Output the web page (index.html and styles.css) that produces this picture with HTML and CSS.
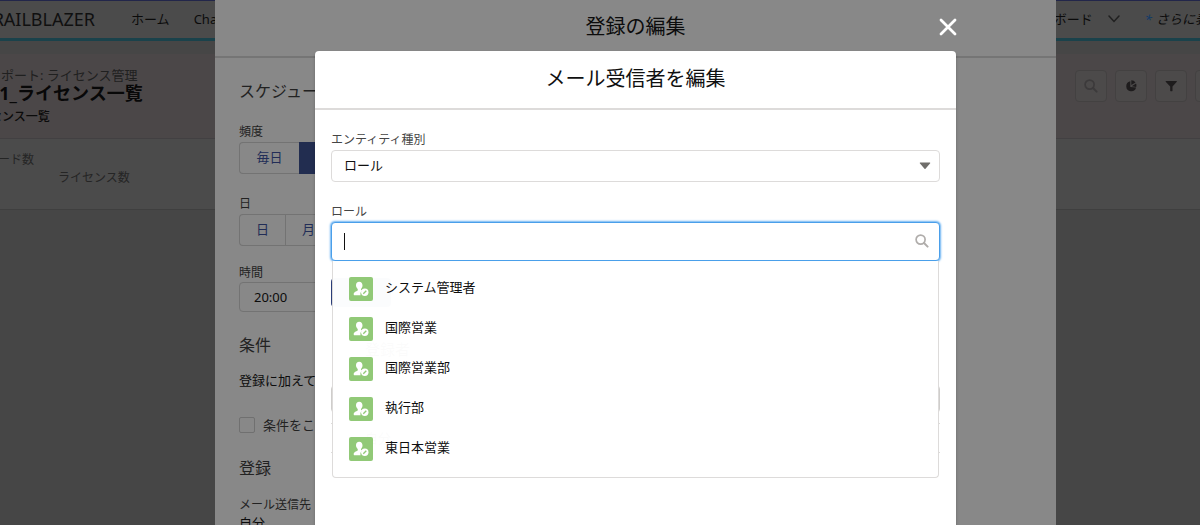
FILE: index.html
```html
<!DOCTYPE html>
<html lang="ja">
<head>
<meta charset="utf-8">
<title>メール受信者を編集</title>
<link rel="stylesheet" href="styles.css">
</head>
<body>
<svg class="defs" aria-hidden="true">
  <symbol id="search" viewBox="0 0 14 14"><circle cx="5.6" cy="5.6" r="4.5" fill="none" stroke="currentColor" stroke-width="1.700"/><path d="M9 9l3.600 3.600" fill="none" stroke="currentColor" stroke-width="2" stroke-linecap="round"/></symbol>
  <symbol id="role" viewBox="0 0 24 24"><rect width="24" height="24" rx="2" fill="#91c977"/><path d="M10.200 4.800c2 0 3.300 1.600 3.300 3.600 0 1.300-.6 2.400-1.300 3.300-.4.500-.3 1.200.3 1.500l.9.400c-1.300.8-2 2-2 3.400 0 .5.100 1 .2 1.300H5.700c-.7 0-1-.4-1-1v-.5c0-1.400 1.500-2.200 3.200-2.900.9-.4 1-.9.9-1.500-.1-.4-.3-.6-.5-.9-.8-.8-1.300-1.900-1.300-3.200 0-2 1.200-3.500 3.200-3.500z" fill="#fff"/><circle cx="15.800" cy="15.200" r="3.700" fill="#fff"/><path d="M14.300 16.700l3-3" stroke="#91c977" stroke-width="1.300"/></symbol>
</svg>

<div class="page">
  <header class="nav">
    <span class="brand">TRAILBLAZER</span>
    <a class="nav-item" href="#">ホーム</a>
    <a class="nav-item" href="#">Chatter</a>
    <div class="nav-end">
      <a class="nav-item" href="#">ダッシュボード</a>
      <svg class="nav-chevron" viewBox="0 0 12 8"><path d="M1 1l5 5.500L11 1" fill="none" stroke="currentColor" stroke-width="1.500" stroke-linecap="round"/></svg>
      <a class="nav-item nav-more" href="#"><span class="star">*</span><span>さらに表示</span></a>
    </div>
  </header>
  <section class="report-head">
    <div class="report-titles">
      <p class="report-kind">レポート: ライセンス管理</p>
      <h1 class="report-title">01_ライセンス一覧</h1>
      <p class="report-desc">ライセンス一覧</p>
    </div>
    <div class="tools">
      <button class="tool tool-off" type="button" aria-label="検索"><svg viewBox="0 0 14 14"><use href="#search"/></svg></button>
      <button class="tool" type="button" aria-label="グラフ"><svg viewBox="0 0 14 14"><path d="M6.300 2.300a5 5 0 1 0 5.800 6.200L6.300 8z" fill="currentColor"/><path d="M7.300 1.200v4.900l4.200-2.700A5 5 0 0 0 7.300 1.200z" fill="currentColor"/><path d="M7.800 7.200l4.200-2.600c.5 1 .5 2.200.200 3.400z" fill="currentColor"/></svg></button>
      <button class="tool" type="button" aria-label="検索条件"><svg viewBox="0 0 14 14"><path d="M2 2h10.500c.4 0 .5.400.3.700L8.500 7.500v4.200c0 .3-.2.500-.5.500H6.700c-.3 0-.5-.2-.5-.5V7.500L1.700 2.700C1.500 2.400 1.600 2 2 2z" fill="currentColor"/></svg></button>
      <button class="tool" type="button" aria-label="その他"></button>
    </div>
  </section>
  <section class="totals">
    <span class="total-records">レコード数</span>
    <span class="total-licenses">ライセンス数</span>
  </section>
</div>

<div class="layer panel-layer">
  <section class="panel">
    <h2 class="panel-title">登録の編集</h2>
    <form class="panel-body">
      <h3 class="section-title">スケジュール</h3>
      <span class="label freq-label">頻度</span>
      <div class="button-group freq-group"><button type="button">毎日</button><button class="selected" type="button">毎週</button><button type="button">毎月</button></div>
      <span class="label day-label">日</span>
      <div class="button-group"><button type="button">日</button><button type="button">月</button><button type="button">火</button></div>
      <label class="label time-label" for="time">時間</label>
      <input class="time" id="time" type="text" value="20:00">
      <h3 class="section-title">条件</h3>
      <p class="condition-text">登録に加えて、レポートに条件を設定できます</p>
      <div class="check-row"><input id="cond" type="checkbox"><label for="cond">条件をこのレポートに追加</label></div>
      <h3 class="section-title">登録</h3>
      <p class="send-label">メール送信先</p>
      <p class="send-value">自分</p>
    </form>
  </section>
</div>

<div class="layer modal-layer">
  <section class="modal" role="dialog" aria-labelledby="modal-title">
    <button class="close" type="button" aria-label="閉じる"><svg viewBox="0 0 18 18"><path d="M2 2l14 14M16 2L2 16" stroke="currentColor" stroke-width="2.800" stroke-linecap="round"/></svg></button>
    <h2 class="modal-title" id="modal-title">メール受信者を編集</h2>
    <form class="modal-body">
      <label class="label" for="entity">エンティティ種別</label>
      <div class="select-wrap">
        <select id="entity"><option>ロール</option></select>
        <svg class="arrow" viewBox="0 0 12 8"><path d="M1.500.5h9c.7 0 1 .6.500 1.100L6.500 6.800c-.3.300-.7.300-1 0L1 1.600C.5 1.100.8.500 1.500.5z" fill="currentColor"/></svg>
      </div>
      <label class="label" for="role-input">ロール</label>
      <div class="lookup">
        <input id="role-input" type="text" role="combobox" aria-expanded="true" aria-controls="roles">
        <span class="caret"></span>
        <svg class="lookup-icon" viewBox="0 0 14 14"><use href="#search"/></svg>
        <ul class="options" id="roles" role="listbox">
          <li role="option"><svg viewBox="0 0 24 24"><use href="#role"/></svg><span>システム管理者</span></li>
          <li role="option"><svg viewBox="0 0 24 24"><use href="#role"/></svg><span>国際営業</span></li>
          <li role="option"><svg viewBox="0 0 24 24"><use href="#role"/></svg><span>国際営業部</span></li>
          <li role="option"><svg viewBox="0 0 24 24"><use href="#role"/></svg><span>執行部</span></li>
          <li role="option"><svg viewBox="0 0 24 24"><use href="#role"/></svg><span>東日本営業</span></li>
        </ul>
      </div>
      <div class="action"></div>
      <p class="added-title">登録者</p>
      <div class="added-box"></div>
      <div class="added-row">自分</div>
    </form>
  </section>
</div>
</body>
</html>
```
FILE: styles.css
```css
* { box-sizing: border-box; }
body {
  margin: 0;
  height: 100vh;
  overflow: hidden;
  background: #464646;
  color: #0b0b0b;
  font: 13px/18px "Noto Sans", "Noto Sans CJK JP", sans-serif;
}
h1, h2, h3, p, ul { margin: 0; padding: 0; font-weight: 400; }
button, input, select { font: inherit; color: inherit; }
svg { display: block; }
.defs { position: absolute; width: 0; height: 0; }

/* Report page */
.page { overflow: hidden; white-space: nowrap; }
.nav {
  display: flex;
  align-items: center;
  height: 41px;
  margin-bottom: 13px;
  padding-bottom: 1px;
  background: #4b4b4b;
  border-top: 1px solid #22264a;
  border-bottom: 3px solid #1a424b;
}
.brand {
  display: flex;
  justify-content: flex-end;
  width: 95px;
  font-size: 18px;
  color: #101010;
}
.nav-item { margin-left: 36px; color: #0b0b0b; text-decoration: none; }
.nav-item + .nav-item { margin-left: 24px; }
.nav-end { display: flex; align-items: center; margin-left: auto; margin-right: -21px; }
.nav-chevron { width: 12px; height: 8px; margin-left: 15px; color: #202020; }
.nav-more { display: flex; gap: 4px; margin-left: 25px; font-style: italic; }
.nav-end .star { color: #103a68; }
.report-head {
  display: flex;
  justify-content: space-between;
  height: 85px;
  padding-top: 12px;
  background: #4b4748;
  border-bottom: 1px solid #424042;
}
.report-kind { margin-left: -12px; color: #202020; line-height: 18px; }
.report-title { margin-left: -11px; font-size: 18px; line-height: 18px; font-weight: 700; color: #080808; }
.report-desc { margin-left: -34px; margin-top: 6px; font-size: 12px; font-weight: 500; }
.tools { display: flex; gap: 8px; margin: 4px -27px 0 0; }
.tool {
  display: grid;
  place-items: center;
  width: 32px;
  height: 32px;
  padding: 0;
  color: #1e1c1d;
  background: #4c4a4a;
  border: 1px solid #434141;
  border-radius: 4px;
}
.tool svg { width: 14px; height: 14px; }
.tool-off { color: #3c3a3b; }
.totals {
  display: grid;
  height: 71px;
  padding-top: 12px;
  align-content: start;
  color: #252525;
  font-size: 12px;
  background: #4b4b4b;
  border-bottom: 1px solid #3f3f3f;
}
.total-records { margin-left: -26px; line-height: 18px; }
.total-licenses { margin-left: 58px; }

/* Overlaid dialogs */
.layer { position: fixed; inset: 0; display: flex; }
.panel-layer { padding: 0 144px 0 215px; }
.panel { flex: 1; overflow: hidden; white-space: nowrap; background: #888; color: #0c0c0c; }
.panel-title {
  padding: 12px 0 14px;
  font-size: 20px;
  line-height: 30px;
  text-align: center;
  border-bottom: 2px solid #757575;
}
.panel-body { display: flex; flex-direction: column; padding: 21px 24px 0; }
.section-title { margin-bottom: 14px; font-size: 16px; line-height: 24px; color: #222; }
.label { font-size: 12px; color: #454545; }
.panel .label, .send-label { color: #222; }
.freq-label { margin-top: 6px; }
.day-label { margin-top: 21px; }
.time-label { margin-top: 18px; }
.button-group { display: flex; margin-top: 1px; }
.button-group button {
  width: 46px;
  height: 32px;
  padding: 0 0 2px;
  color: #222d57;
  background: #888;
  border: 1px solid #737373;
  border-right: 0;
}
.button-group button:first-child { border-radius: 4px 0 0 4px; }
.freq-group button { width: 60px; }
.button-group .selected { color: #888; background: #222d50; border-color: #222d50; }
.time {
  width: 160px;
  height: 30px;
  margin: 0 0 21px;
  padding: 0 14px;
  background: #888;
  border: 1px solid #737373;
  border-radius: 4px;
}
.check-row { display: flex; align-items: center; gap: 8px; margin: 27px 0 22px; color: #222; }
.check-row input {
  appearance: none;
  width: 16px;
  height: 16px;
  margin: 0;
  border: 1px solid #707070;
  border-radius: 2px;
}
.send-label { font-size: 12px; margin-top: 2px; }

.modal-layer { padding: 51px 244px 0 315px; }
.modal {
  position: relative;
  flex: 1;
  min-width: 0;
  background: #fff;
  color: #101010;
  border-radius: 4px 4px 0 0;
  box-shadow: 0 2px 3px rgba(0, 0, 0, .25);
}
.close {
  position: absolute;
  top: -33px;
  right: -1px;
  padding: 0;
  color: #fff;
  background: none;
  border: 0;
}
.close svg { width: 18px; height: 18px; }
.modal-title {
  padding: 13px 0 14px;
  font-size: 20px;
  line-height: 30px;
  text-align: center;
  border-bottom: 2px solid #dddbda;
}
.modal-body { display: flex; flex-direction: column; padding: 21px 16px 0; }
.select-wrap { position: relative; margin: 1px 0 21px; }
.select-wrap select {
  appearance: none;
  display: block;
  width: 100%;
  height: 32px;
  padding: 0 12px 2px;
  background: #fff;
  border: 1px solid #dddbda;
  border-radius: 4px;
}
.arrow { position: absolute; right: 9px; top: 12px; width: 12px; height: 8px; color: #706e6b; }
.lookup { position: relative; margin-top: 1px; }
.lookup input {
  display: block;
  width: 100%;
  height: 39px;
  padding: 0 36px 0 12px;
  outline: 0;
  background: #fff;
  border: 1px solid #4a9fea;
  border-radius: 4px;
  box-shadow: 0 0 2px 1px #6ab2f2;
}
.caret { position: absolute; left: 13px; top: 11px; width: 1px; height: 17px; background: #111; }
.lookup-icon { position: absolute; right: 11px; top: 12px; width: 14px; height: 14px; color: #b0adab; }
.options {
  position: absolute;
  z-index: 1;
  top: 100%;
  left: 1px;
  right: 1px;
  padding: 8px 16px;
  list-style: none;
  background: rgba(255, 255, 255, .985);
  border: 1px solid #dddbda;
  border-top: 0;
  border-radius: 0 0 4px 4px;
}
.options li { display: flex; align-items: center; gap: 12px; height: 40px; }
.options span { padding-bottom: 4px; }
.options svg { width: 24px; height: 24px; }
.action { width: 60px; height: 29px; margin-top: 17px; background: #2a3d78; border-radius: 4px; }
.added-title { margin: 33px 0 27px 34px; font-size: 15px; }
.added-box { height: 28px; border: 1px solid #cfcdcb; border-radius: 4px; }
.added-row { margin-top: 10px; padding: 4px 34px; line-height: 20px; border: solid #dddbda; border-width: 1px 0; }
```
